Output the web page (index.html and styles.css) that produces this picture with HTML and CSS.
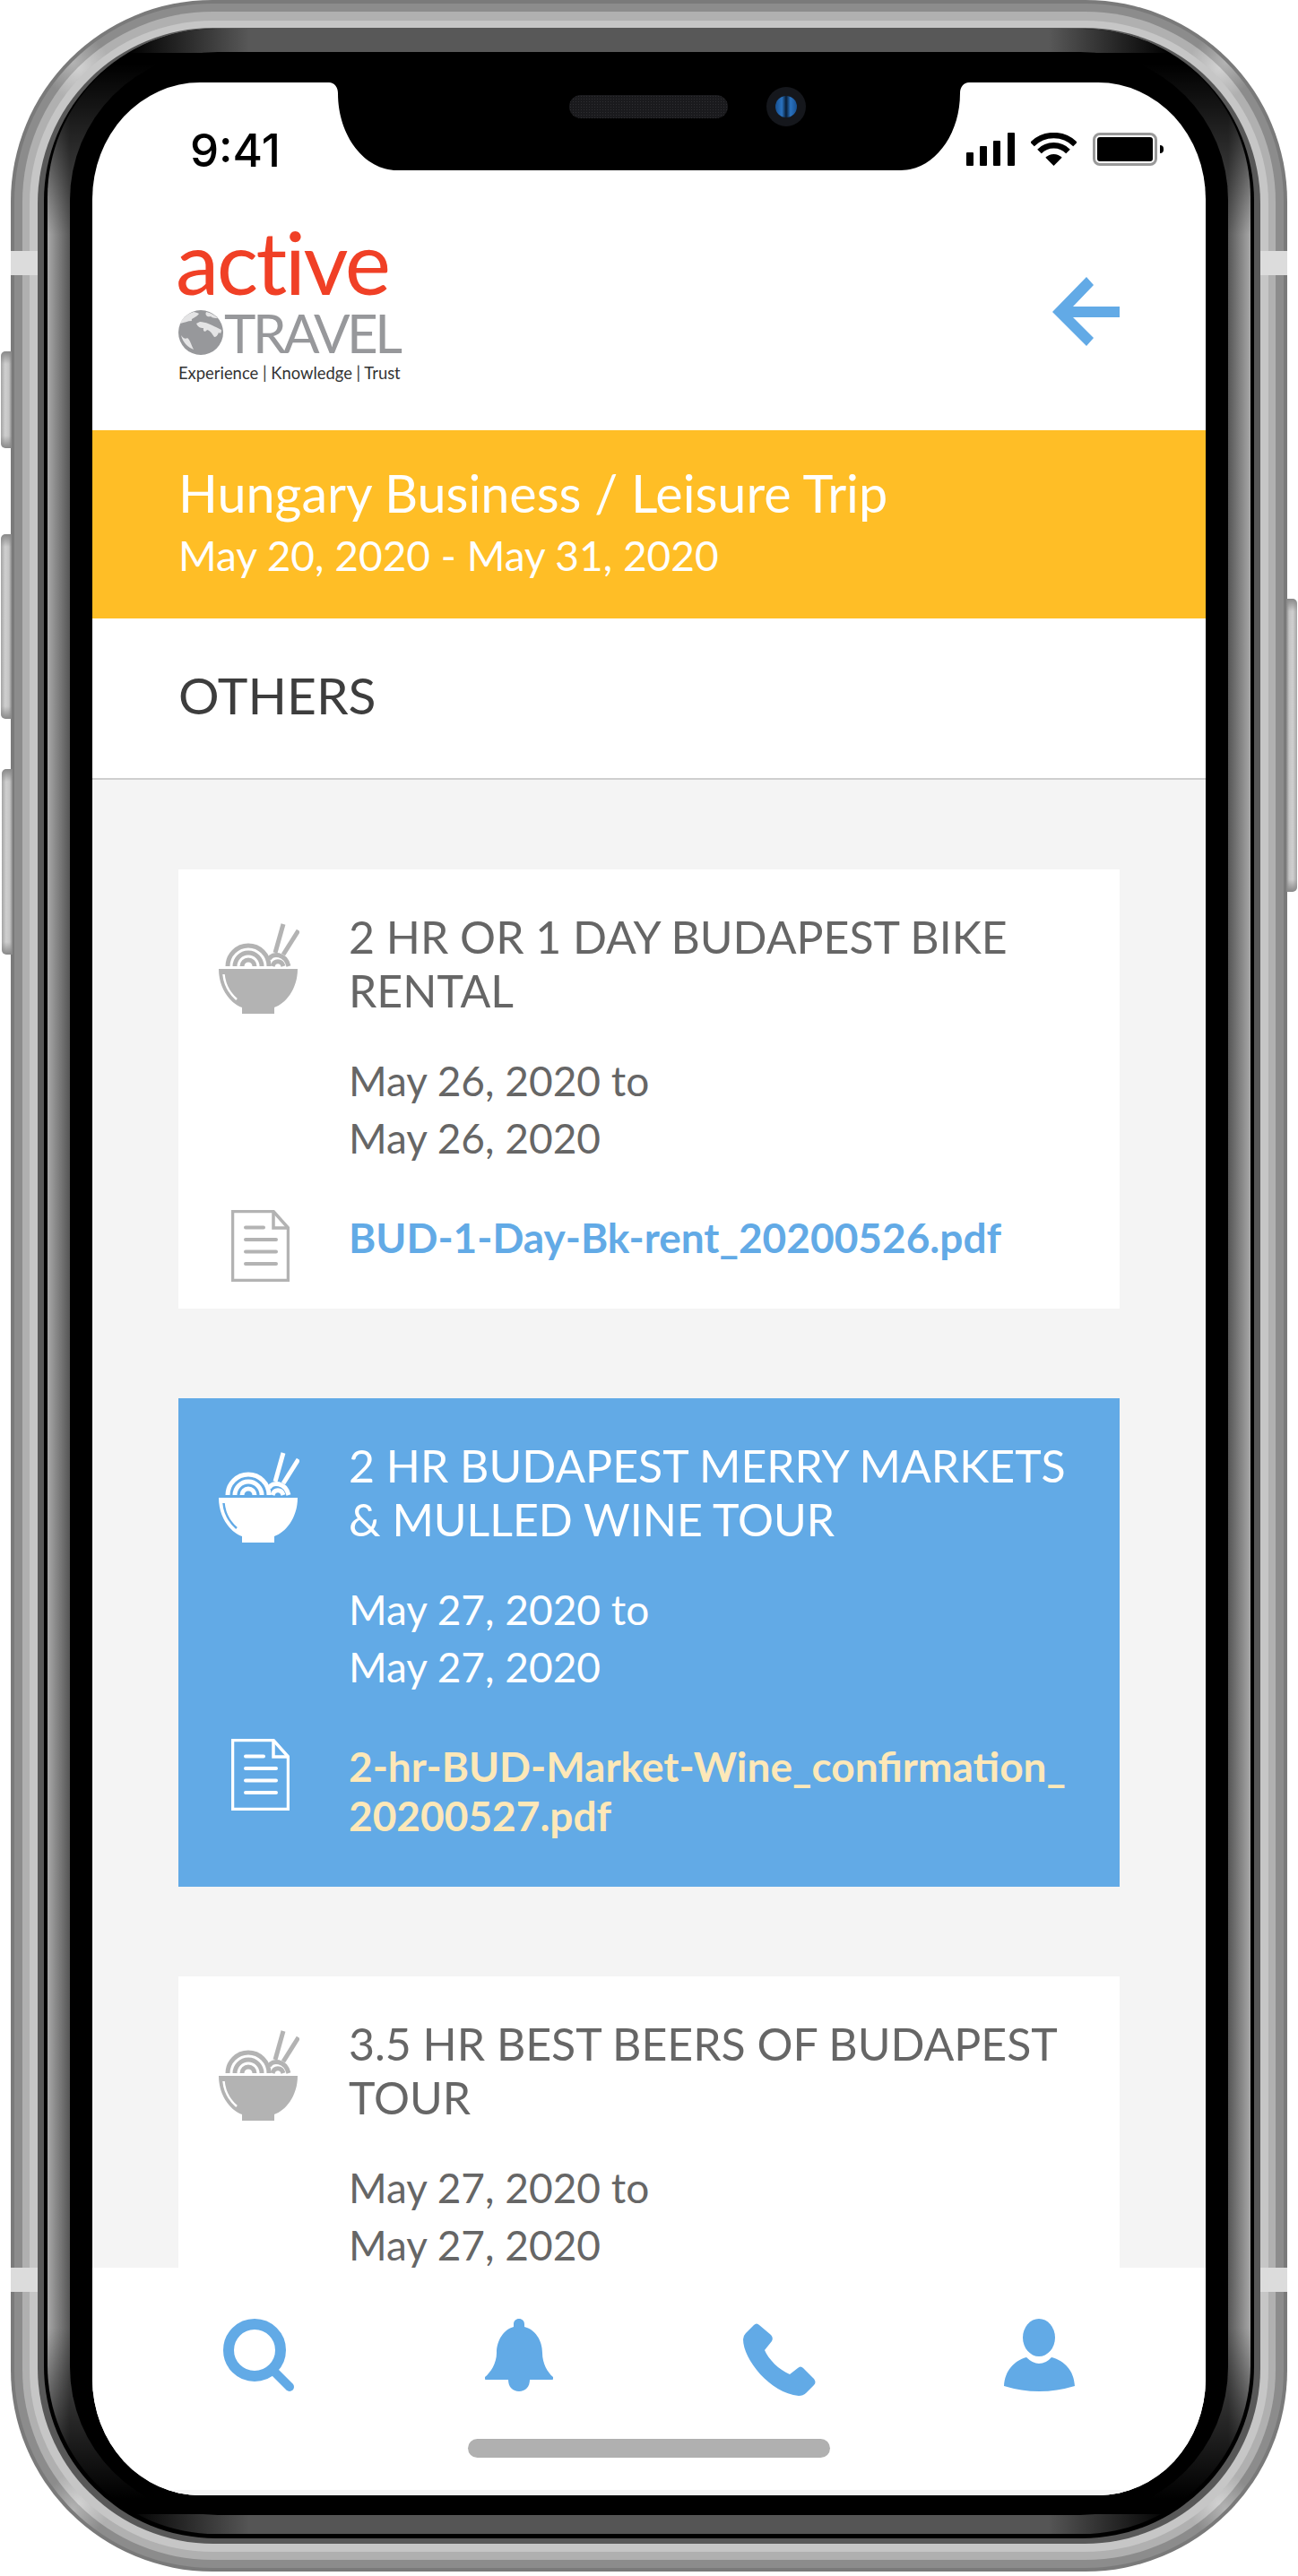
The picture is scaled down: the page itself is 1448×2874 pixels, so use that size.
FILE: index.html

```html
<!DOCTYPE html>
<html>
<head>
<meta charset="utf-8">
<title>Active Travel - Others</title>
<link rel="stylesheet" href="styles.css">
</head>
<body>
<div class="device">
	<span class="key key-a"></span>
	<span class="key key-b"></span>
	<span class="key key-c"></span>
	<span class="key key-d"></span>
	<span class="notch-band band-tl"></span>
	<span class="notch-band band-tr"></span>
	<span class="notch-band band-bl"></span>
	<span class="notch-band band-br"></span>

	<div class="rim rim-1"><div class="rim rim-2"><div class="rim rim-3"><div class="rim rim-4">
	<div class="rim rim-5"><div class="rim rim-6"><div class="rim rim-7"><div class="rim rim-8">
		<div class="screen">
			<svg class="notch" viewBox="0 0 714 98"><path d="M0 0H714C708 0 704 5 704 12C704 60 674 98 638 98H76C40 98 10 60 10 12C10 5 6 0 0 0Z"/></svg>
			<div class="speaker"></div>
			<div class="camera"><span></span></div>

			<div class="status">
				<span class="time">9:41</span>
				<div class="status-icons">
					<svg class="signal" viewBox="0 0 54 37"><rect x="0" y="22" width="8" height="15" rx="1"/><rect x="15" y="15" width="8" height="22" rx="1"/><rect x="30" y="9" width="8" height="28" rx="1"/><rect x="46" y="0" width="8" height="37" rx="1"/></svg>
					<svg class="wifi" viewBox="0 0 51 37"><path d="M1.500 13A34 34 0 0 1 49.500 13" fill="none" stroke="#000" stroke-width="6.500"/><path d="M9.500 21A22.600 22.600 0 0 1 41.500 21" fill="none" stroke="#000" stroke-width="6.500"/><path d="M25.500 37L16.300 27.800A13 13 0 0 1 34.700 27.800Z"/></svg>
					<div class="battery"><span></span></div>
				</div>
			</div>

			<div class="top">
				<div class="logo">
					<div class="logo-active">active</div>
					<div class="logo-travel">
						<svg class="globe" viewBox="0 0 50 50">
							<circle cx="25" cy="25" r="25" fill="#97989b"/>
							<path fill="#e4e4e5" d="M17 2C10 4 4 9 2 15C7 14 10 12 15 12C13 9 21 8 23 4C21 3 19 2 17 2ZM31 2C29 6 33 8 36 7C38 9 42 9 44 9C41 6 36 3 31 2ZM3 28C5 31 8 33 10 31C13 33 14 38 17 44C12 42 5 37 3 28ZM20 15C22 19 24 20 28 20C27 24 30 25 32 22C36 23 38 27 40 30C42 30 44 28 45 25C47 27 48 25 48 22L42 19C38 17 30 13 24 13Z"/>
						</svg>
						<span>TRAVEL</span>
					</div>
					<div class="logo-tag">Experience | Knowledge | Trust</div>
				</div>
				<svg class="back" viewBox="0 0 75 77"><path d="M0 39L38 0L46 9L23 33H75V45H23L46 68L38 77Z"/></svg>
			</div>

			<div class="trip-head">
				<h1>Hungary Business / Leisure Trip</h1>
				<p>May 20, 2020 - May 31, 2020</p>
			</div>
			<div class="section">OTHERS</div>

			<div class="list">
				<div class="card">
					<svg class="bowl" viewBox="0 0 90 101"><use href="#bowl"/></svg>
					<div>
						<div class="card-title">2 HR OR 1 DAY BUDAPEST BIKE RENTAL</div>
						<div class="card-date">May 26, 2020 to<br>May 26, 2020</div>
					</div>
					<svg class="doc" viewBox="0 0 65 80"><use href="#doc"/></svg>
					<a class="card-link">BUD-1-Day-Bk-rent_20200526.pdf</a>
				</div>
				<div class="card card-on">
					<svg class="bowl" viewBox="0 0 90 101"><use href="#bowl"/></svg>
					<div>
						<div class="card-title">2 HR BUDAPEST MERRY MARKETS &amp; MULLED WINE TOUR</div>
						<div class="card-date">May 27, 2020 to<br>May 27, 2020</div>
					</div>
					<svg class="doc" viewBox="0 0 65 80"><use href="#doc"/></svg>
					<a class="card-link">2-hr-BUD-Market-Wine_confirmation_<br>20200527.pdf</a>
				</div>
				<div class="card">
					<svg class="bowl" viewBox="0 0 90 101"><use href="#bowl"/></svg>
					<div>
						<div class="card-title">3.5 HR BEST BEERS OF BUDAPEST TOUR</div>
						<div class="card-date">May 27, 2020 to<br>May 27, 2020</div>
					</div>
				</div>
			</div>

			<div class="tabs">
				<svg class="tab-search" viewBox="0 0 80 81"><circle cx="35" cy="35" r="29" fill="none" stroke="currentColor" stroke-width="12"/><path d="M58 60L74 76" stroke="currentColor" stroke-width="10" stroke-linecap="round"/></svg>
				<svg class="tab-bell" viewBox="0 0 76 81"><path d="M38 0C41.500 0 44 2.500 44 6V9C56 12 64 24 64 38C64 50 70 60 76 65C77 67 76 68 74 68H2C0 68-1 67 0 65C6 60 13 50 13 38C13 24 21 12 32 9V6C32 2.500 34.500 0 38 0Z"/><path d="M26 68H50C50 76 45 81 38 81C31 81 26 76 26 68Z"/></svg>
				<svg class="tab-phone" viewBox="0 0 81 81"><path d="M12 2Q15-1 18 2L31 13Q34 16 32 20L24 30C28 40 40 52 52 57L61 50Q64 47 67 50L79 62Q82 66 79 69L70 78Q67 81 62 81C30 78 0 40 0 18Q0 14 3 11Z"/></svg>
				<svg class="tab-user" viewBox="0 0 79 81"><ellipse cx="39" cy="21" rx="18" ry="21"/><path d="M0 75C1 58 11 47 25 43Q32 50 39 50Q47 50 53 43C68 47 78 58 79 75Q39 87 0 75Z"/></svg>
				<div class="home-bar"></div>
			</div>
		</div>
	</div></div></div></div></div></div></div></div>
</div>

<svg class="defs" width="0" height="0">
	<defs>
		<g id="bowl">
			<path d="M0 51H88C88 74 74 90 62 94V101H26V94C14 90 0 74 0 51Z"/>
			<path class="bowl-shine" d="M5.500 57C6.500 68 12 78 20 85"/>
			<g class="bowl-lines">
				<path d="M10 48A23 23 0 0 1 56 48"/>
				<path d="M18 48A15 15 0 0 1 48 48"/>
				<path d="M26 48A7 7 0 0 1 40 48"/>
				<path d="M56 40C60 33 74 33 78 48"/>
				<path d="M60 48C62 41 70 41 72 48"/>
				<path d="M63 33L72 1"/>
				<path d="M72 35L89 8"/>
			</g>
		</g>
		<g id="doc" class="doc-lines">
			<path d="M1.500 1.500H47L63.500 20V78.500H1.500Z"/>
			<path d="M47 2V20H63"/>
			<path class="doc-row" d="M16 19.500H36M16 33H50M16 46.500H50M16 60H50"/>
		</g>
	</defs>
</svg>
</body>
</html>
```

FILE: styles.css

```css
html, body { margin: 0; background: #fff; }
body { width: 1448px; height: 2874px; overflow: hidden; font-family: "Lato", "Noto Sans", sans-serif; }

/* phone body: nested rims, thickness differs per side */
.device { position: relative; width: 1424px; height: 2869px; margin-left: 12px; }
.rim { box-sizing: border-box; height: 100%; }
.rim-1 { background: #7a7a7a; padding: 4px 4px 4px; border-radius: 225px; }
.rim-2 {
	--glint: #b4b4b4;
	padding: 9px 9px 9px;
	border-radius: 221px;
	background:
		radial-gradient(circle 36px at 65px 65px, var(--glint), transparent),
		radial-gradient(circle 36px at calc(100% - 65px) 65px, var(--glint), transparent),
		radial-gradient(circle 36px at 65px calc(100% - 65px), var(--glint), transparent),
		radial-gradient(circle 36px at calc(100% - 65px) calc(100% - 65px), var(--glint), transparent),
		#8c8c8c;
}
.rim-3 {
	--glint: #d2d2d2;
	padding: 10px 8px 9px;
	border-radius: 212px;
	background:
		radial-gradient(circle 36px at 62px 62px, var(--glint), transparent),
		radial-gradient(circle 36px at calc(100% - 62px) 62px, var(--glint), transparent),
		radial-gradient(circle 36px at 62px calc(100% - 62px), var(--glint), transparent),
		radial-gradient(circle 36px at calc(100% - 62px) calc(100% - 62px), var(--glint), transparent),
		#b0b0b0;
}
.rim-4 { background: #c6c6c6; padding: 8px 9px 9px; border-radius: 204px; }
.rim-5 { background: #585858; padding: 1px 7px 6px; border-radius: 196px; }
.rim-6 { background: #000; padding: 0 4px 5px; border-radius: 192px; }
.rim-7 {
	padding: 26px 25px 21px;
	border-radius: 188px;
	background:
		linear-gradient(90deg, #000 90px, #585858 225px, #585858 calc(100% - 225px), #000 calc(100% - 90px)) top / 100% 27px no-repeat,
		linear-gradient(90deg, #000 90px, #555 225px, #555 calc(100% - 225px), #000 calc(100% - 90px)) bottom / 100% 22px no-repeat,
		linear-gradient(180deg, #000 40px, transparent 230px, transparent calc(100% - 230px), #000 calc(100% - 40px)),
		linear-gradient(90deg, #a8a8a8, #555 25px, #555 calc(100% - 25px), #a8a8a8);
}
.rim-8 { background: #000; padding: 34px 25px 22px; border-radius: 165px; }

/* hardware bits */
.key {
	position: absolute;
	width: 12px;
	background:
		linear-gradient(180deg, #888 0, transparent 14px, transparent calc(100% - 14px), #888 100%),
		linear-gradient(90deg, #a4a4a4, #cfcfcf 40%, #c4c4c4 75%, #8a8a8a);
}
.key-a { left: -11px; top: 392px; height: 108px; border-radius: 5px 0 0 5px; }
.key-b { left: -11px; top: 596px; height: 206px; border-radius: 5px 0 0 5px; }
.key-c { left: -10px; top: 858px; height: 207px; border-radius: 5px 0 0 5px; }
.key-d { right: -11px; top: 668px; height: 327px; border-radius: 5px 0 0 5px; transform: scaleX(-1); }
.notch-band { position: absolute; width: 30px; height: 27px; background: #dcdcdc; }
.band-tl { left: 0; top: 280px; }
.band-tr { right: 0; top: 280px; }
.band-bl { left: 0; top: 2530px; }
.band-br { right: 0; top: 2530px; }

.screen {
	position: relative;
	display: flex;
	flex-direction: column;
	height: 100%;
	overflow: hidden;
	background: #fff;
	border-radius: 120px / 130px;
}
.notch { position: absolute; left: 264px; top: 0; width: 714px; height: 98px; fill: #000; }
.speaker {
	position: absolute; left: 532px; top: 14px; width: 177px; height: 26px; border-radius: 13px;
	background: radial-gradient(circle, #2e2e31 1px, #1a1a1d 1px) 0 0 / 3px 3px;
}
.camera { position: absolute; left: 752px; top: 5px; width: 44px; height: 44px; border-radius: 50%; background: #15171c; }
.camera span {
	position: absolute; left: 10px; top: 10px; width: 24px; height: 24px; border-radius: 50%;
	background: linear-gradient(90deg, #174f8f, #2a72bf 30%, #0b2440 48%, #0b2440 52%, #2a72bf 70%, #174f8f);
}

.status { display: flex; justify-content: space-between; height: 98px; flex: none; padding: 0 54px 0 109px; box-sizing: border-box; }
.time { font: 500 51px/60px "Inter", "Liberation Sans", sans-serif; color: #000; margin-top: 46px; }
.status-icons { display: flex; gap: 18px; margin-top: 56px; height: 37px; }
.signal { width: 54px; height: 37px; }
.wifi { width: 51px; height: 37px; }
.battery { position: relative; box-sizing: border-box; width: 72px; height: 37px; border: 3px solid #999; border-radius: 8px; padding: 2px; }
.battery span { display: block; height: 100%; background: #000; border-radius: 3px; }
.battery:after { content: ""; position: absolute; right: -10px; top: 11px; width: 4px; height: 9px; background: #000; border-radius: 0 4px 4px 0; }

.top { display: flex; justify-content: space-between; align-items: flex-start; flex: none; height: 290px; box-sizing: border-box; padding: 72px 96px 0 96px; }
.logo { width: 248px; color: #333; }
.logo-active { font-size: 97px; line-height: 76px; height: 78px; color: #f04026; letter-spacing: -2.500px; margin: -8px 0 0 -3px; }
.logo-travel { display: flex; align-items: center; height: 50px; color: #97989b; font-size: 60px; margin-top: 14px; }
.logo-travel span { margin-left: 1px; letter-spacing: -3.500px; }
.globe { width: 50px; height: 50px; flex: none; }
.logo-tag { font-size: 18.400px; line-height: 22px; margin-top: 9px; white-space: nowrap; }
.back { width: 75px; height: 77px; margin-top: 47px; fill: #62aae6; }

.trip-head { flex: none; height: 210px; box-sizing: border-box; padding: 28px 96px 0; background: #ffbe26; color: #fff; }
.trip-head h1 { margin: 0; font-size: 57.500px; line-height: 83px; font-weight: 400; }
.trip-head p { margin: 0; font-size: 46px; line-height: 58px; }

.section { flex: none; height: 180px; box-sizing: border-box; border-bottom: 2px solid #cfcfcf; padding: 0 96px; font-size: 57px; line-height: 170px; color: #3d3d3d; }

.list { flex: 1; min-height: 0; overflow: hidden; background: #f4f4f4; padding: 100px 96px 0; }
.card {
	--ink: #b3b3b3;
	--bg: #fff;
	display: grid;
	grid-template-columns: 190px 1fr;
	row-gap: 51px;
	padding: 45px 40px 52px 0;
	margin-bottom: 100px;
	background: var(--bg);
	color: #666;
}
.card-on { --ink: #fff; --bg: #62aae6; color: #fff; }
.card-title { font-size: 50px; line-height: 60px; }
.card-date { font-size: 46px; line-height: 64px; margin-top: 39px; }
.card-link { font-size: 46px; line-height: 55px; font-weight: 700; color: #62aae6; }
.card-on .card-link { color: #fde8b8; }

.bowl { width: 90px; height: 101px; margin: 15px 0 0 45px; fill: var(--ink); }
.bowl-shine { fill: none; stroke: var(--bg); stroke-width: 2.500; }
.bowl-lines { fill: none; stroke: var(--ink); stroke-width: 5; }
.doc { width: 65px; height: 80px; margin: -3px 0 -22px 59px; }
.doc-lines { fill: none; stroke: var(--ink); stroke-width: 3.500; }
.doc-row { stroke-width: 4; stroke-linecap: round; }

.tabs {
	position: relative;
	flex: none;
	display: grid;
	grid-template-columns: repeat(4, 290px);
	justify-items: center;
	align-items: start;
	box-sizing: border-box;
	height: 254px;
	padding: 57px 41px 0;
	background: #fff;
	border-bottom: 6px solid #f4f4f4;
	color: #62aae6;
	fill: #62aae6;
}
.tab-search { width: 80px; height: 81px; }
.tab-bell { width: 76px; height: 81px; }
.tab-phone { width: 81px; height: 81px; margin-top: 5px; }
.tab-user { width: 79px; height: 81px; }
.home-bar { position: absolute; left: 419px; top: 191px; width: 404px; height: 21px; border-radius: 11px; background: #b0b0b0; }
.defs { position: absolute; }
```
